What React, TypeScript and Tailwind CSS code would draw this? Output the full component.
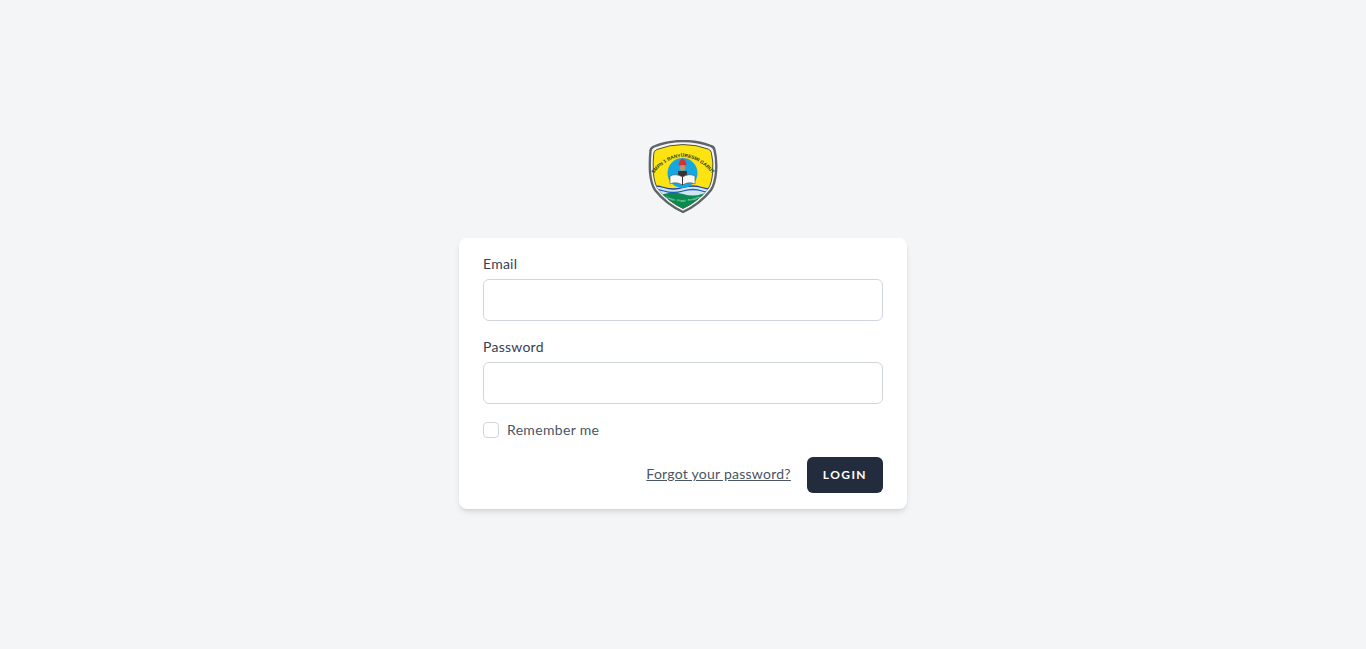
const shieldPath =
  'M4.5 11 Q4.5 8 8 6.5 Q22 1 37 1 Q52 1 65 6 Q68 7 68.5 10 Q71 20 70 32 Q69 44 65 50 Q54 64 37 72 Q20 64 9 50 Q5 44 4 32 Q3.5 20 4.5 11Z';
const innerTransform = 'translate(37 36.5) scale(0.9) translate(-37 -36.5)';

function Logo() {
  return (
    <svg viewBox="0 0 74 74" className="w-[74px] h-[74px]">
      <defs>
        <path id="arc" d="M8 33 Q36 1 66 33" fill="none" />
        <path id="arc2" d="M16 56 Q36 67 58 56" fill="none" />
        <clipPath id="shield">
          <path d={shieldPath} transform={innerTransform} />
        </clipPath>
      </defs>
      {/* shield */}
      <path d={shieldPath} fill="#f4f5f6" stroke="#5f6468" strokeWidth="2.4" />
      <path d={shieldPath} transform={innerTransform} fill="#fde312" stroke="#37403f" strokeWidth="1" />
      <g clipPath="url(#shield)">
        <rect x="0" y="52" width="74" height="22" fill="#0b8a4f" />
        <path d="M0 47 Q9 44 18 47 T37 47 T56 47 T74 47 V54 Q65 51 56 54 T37 54 T18 54 T0 54Z" fill="#cfe6f2" />
        <path d="M0 47.5 Q9 44.5 18 47.5 T37 47.5 T56 47.5 T74 47.5" fill="none" stroke="#23409a" strokeWidth="1.3" />
        <path d="M0 51 Q9 48 18 51 T37 51 T56 51 T74 51" fill="none" stroke="#1f5fb0" strokeWidth="1.3" />
      </g>
      {/* sky circle */}
      <circle cx="36.5" cy="33" r="15" fill="#16a6e0" />
      {/* figure and book */}
      <path d="M32.5 25 Q33 20 36.5 18.5 Q40 20 40.5 25Z" fill="#d8322f" />
      <circle cx="36.5" cy="28" r="2.8" fill="#c98f62" />
      <path d="M32 31 H41 L40.5 42 H32.5Z" fill="#3a3230" />
      <path d="M24 36 Q30 33 36.5 37 Q43 33 49 36 V44 Q43 41 36.5 45 Q30 41 24 44Z" fill="#f7f7f5" stroke="#4b5563" strokeWidth="0.6" />
      <path d="M36.5 37 V45" stroke="#3a3230" strokeWidth="1" />
      <text fontSize="4.8" fontWeight="700" fill="#2a3320" fontFamily="'Liberation Sans', sans-serif">
        <textPath href="#arc" startOffset="50%" textAnchor="middle">SMPN 1 BANYURESMI GARUT</textPath>
      </text>
      <text fontSize="2.8" fill="#d9efe0" fontFamily="'Liberation Sans', sans-serif">
        <textPath href="#arc2" startOffset="50%" textAnchor="middle">Cerdas · Unggul · Berakhlak</textPath>
      </text>
    </svg>
  );
}

export default function App() {
  return (
    <div className="min-h-screen flex flex-col justify-center items-center bg-[#f4f5f7] font-['Lato','Noto_Sans',sans-serif]">
      <Logo />

      <div className="w-full max-w-md mt-6 px-6 py-4 bg-white shadow-md rounded-lg">
        <form>
          <div>
            <label className="block h-[21px] text-sm font-normal text-gray-700 leading-[19px] tracking-[0.25px]">Email</label>
            <input type="email" className="block mt-1 w-full h-[42px] rounded-md border border-gray-300" />
          </div>

          <div className="mt-4">
            <label className="block h-[21px] text-sm font-normal text-gray-700 leading-[19px] tracking-[0.25px]">Password</label>
            <input type="password" className="block mt-1 w-full h-[42px] rounded-md border border-gray-300" />
          </div>

          <div className="block mt-4">
            <label className="flex items-center h-[21px] pb-[2px]">
              <input type="checkbox" className="appearance-none w-4 h-4 bg-white rounded border border-gray-300" />
              <span className="ml-2 text-sm text-gray-600 tracking-[0.33px]">Remember me</span>
            </label>
          </div>

          <div className="flex items-center justify-end mt-4">
            <a href="#" className="underline text-sm text-gray-600 tracking-[0.25px] pb-0.5">Forgot your password?</a>
            <button type="button" className="inline-flex items-center h-9 ml-4 px-4 py-2 bg-[#232c3d] rounded-md font-bold text-xs text-white uppercase tracking-[1.4px]">
              Login
            </button>
          </div>
        </form>
      </div>
    </div>
  );
}
